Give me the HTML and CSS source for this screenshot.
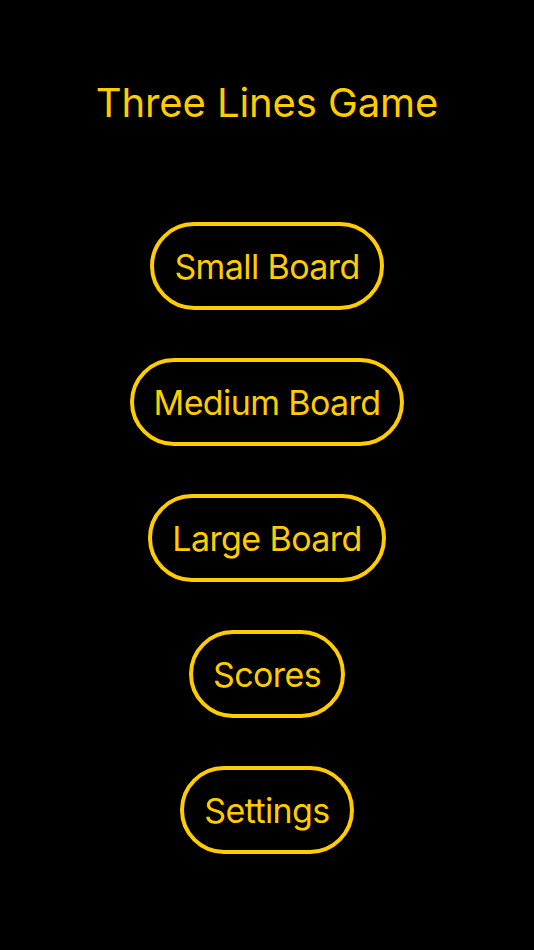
FILE: index.html
```html
<!DOCTYPE html>
<html>
<head>
<meta charset="utf-8">
<link rel="stylesheet" href="styles.css">
</head>
<body>
<main class="menu">
  <h1 class="title">Three Lines Game</h1>
  <nav class="buttons">
    <button class="pill">Small Board</button>
    <button class="pill">Medium Board</button>
    <button class="pill">Large Board</button>
    <button class="pill">Scores</button>
    <button class="pill">Settings</button>
  </nav>
</main>
</body>
</html>
```
FILE: styles.css
```css
html, body {
  margin: 0;
  padding: 0;
  background: #000;
}
body {
  width: 534px;
  height: 950px;
  font-family: Inter, "Noto Sans", sans-serif;
  color: #ffcc00;
}
.menu {
  display: flex;
  flex-direction: column;
  align-items: center;
}
.title {
  margin: 76px 0 0 0;
  height: 54px;
  line-height: 54px;
  font-size: 40px;
  font-weight: 400;
  letter-spacing: -0.1px;
}
.buttons {
  display: flex;
  flex-direction: column;
  align-items: center;
  gap: 48px;
  margin-top: 92px;
}
.pill {
  box-sizing: border-box;
  height: 88px;
  padding: 0 20px;
  border: 4px solid #ffcc00;
  border-radius: 44px;
  background: transparent;
  color: #ffcc00;
  font-family: Inter, "Noto Sans", sans-serif;
  font-size: 34px;
  font-weight: 400;
  letter-spacing: -0.6px;
}
```
